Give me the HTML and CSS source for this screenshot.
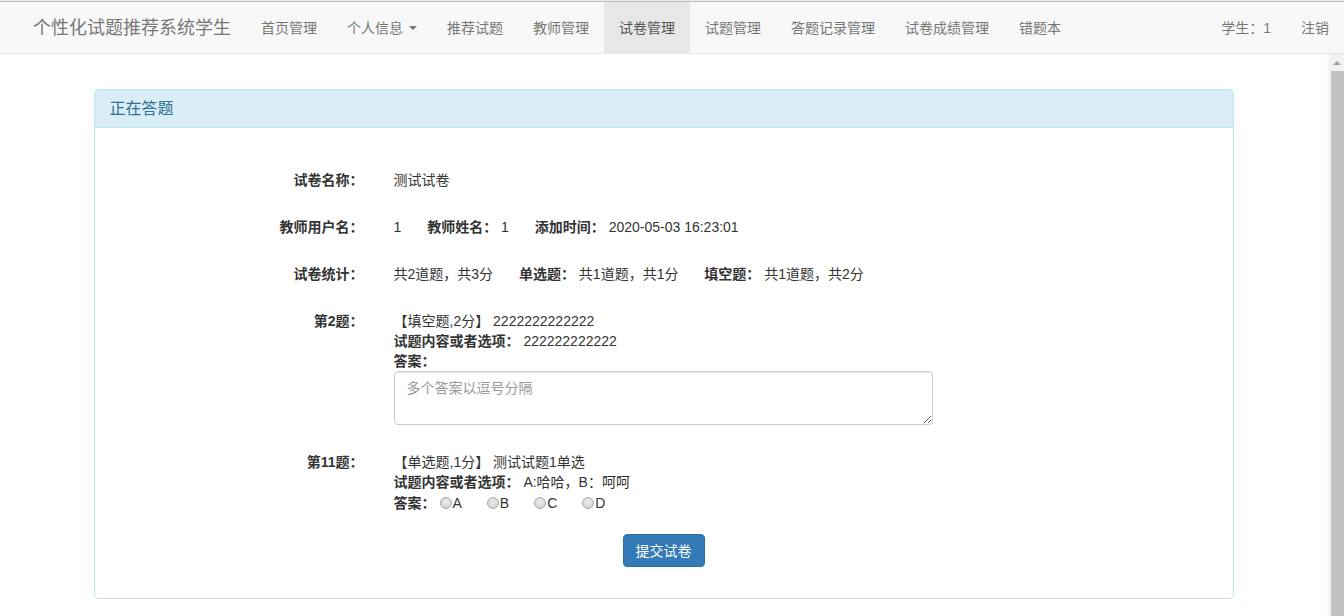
FILE: index.html
```html
<!DOCTYPE html>
<html lang="zh-CN">
<head>
<meta charset="utf-8">
<title>正在答题</title>
<link rel="stylesheet" href="styles.css">
</head>
<body>
<div class="topline"></div>
<nav class="navbar">
  <a class="brand" href="#">个性化试题推荐系统学生</a>
  <ul class="nav">
    <li><a href="#">首页管理</a></li>
    <li><a href="#">个人信息 <span class="caret"></span></a></li>
    <li><a href="#">推荐试题</a></li>
    <li><a href="#">教师管理</a></li>
    <li class="active"><a href="#">试卷管理</a></li>
    <li><a href="#">试题管理</a></li>
    <li><a href="#">答题记录管理</a></li>
    <li><a href="#">试卷成绩管理</a></li>
    <li><a href="#">错题本</a></li>
  </ul>
  <ul class="nav nav-right">
    <li><a href="#">学生：1</a></li>
    <li><a href="#">注销</a></li>
  </ul>
</nav>
<div class="viewport">
  <main class="page">
    <div class="container">
      <section class="panel">
        <div class="panel-heading">正在答题</div>
        <form class="panel-body">
          <div class="field">
            <div class="label">试卷名称：</div>
            <div class="value"><span class="paper">测试试卷</span></div>
          </div>
          <div class="field">
            <div class="label">教师用户名：</div>
            <div class="value">
              <span class="item">1</span>
              <span class="item"><b>教师姓名：</b> 1</span>
              <span class="item"><b>添加时间：</b> 2020-05-03 16:23:01</span>
            </div>
          </div>
          <div class="field">
            <div class="label">试卷统计：</div>
            <div class="value">
              <span class="item">共2道题，共3分</span>
              <span class="item"><b>单选题：</b> 共1道题，共1分</span>
              <span class="item"><b>填空题：</b> 共1道题，共2分</span>
            </div>
          </div>
          <div class="field">
            <div class="label">第2题：</div>
            <div class="value">
              <div class="line">【填空题,2分】 2222222222222</div>
              <div class="line"><b>试题内容或者选项：</b> 222222222222</div>
              <div class="line"><b>答案：</b></div>
              <textarea class="answer" placeholder="多个答案以逗号分隔"></textarea>
            </div>
          </div>
          <div class="field">
            <div class="label">第11题：</div>
            <div class="value">
              <div class="line">【单选题,1分】 <span class="paper">测试试题1单选</span></div>
              <div class="line"><b>试题内容或者选项：</b> A:哈哈，B：呵呵</div>
              <div class="line radios"><b>答案：</b><label class="opt"><input type="radio" name="q11">A</label><label class="opt"><input type="radio" name="q11">B</label><label class="opt"><input type="radio" name="q11">C</label><label class="opt"><input type="radio" name="q11">D</label></div>
            </div>
          </div>
          <div class="actions">
            <button type="button" class="btn">提交试卷</button>
          </div>
        </form>
      </section>
    </div>
  </main>
  <div class="scrollbar" aria-hidden="true">
    <span class="sb-arrow"></span>
    <span class="sb-thumb"></span>
  </div>
</div>
</body>
</html>
```
FILE: styles.css
```css
* { box-sizing: border-box; }
html, body { margin: 0; height: 100%; }
body {
  font-family: "Liberation Sans", "Noto Sans CJK SC", sans-serif;
  font-size: 14px;
  line-height: 20px;
  color: #333;
  background: #fff;
  display: flex;
  flex-direction: column;
  overflow: hidden;
}
a { text-decoration: none; }
b { font-weight: bold; }

.topline { height: 1px; background: #ececec; flex: none; }

.navbar {
  flex: none;
  height: 53px;
  display: flex;
  align-items: stretch;
  background: #f8f8f8;
  border-top: 1px solid #bdbdbd;
  border-bottom: 1px solid #e7e7e7;
  padding-left: 18px;
}
.brand {
  display: flex;
  align-items: center;
  padding: 0 15px;
  font-size: 18px;
  color: #777;
}
.nav {
  list-style: none;
  margin: 0;
  padding: 0;
  display: flex;
}
.nav li { display: flex; }
.nav a {
  display: flex;
  align-items: center;
  padding: 0 15px;
  color: #777;
  white-space: pre;
}
.nav .active a { background: #e7e7e7; color: #555; }
.nav-right { margin-left: auto; }
.caret {
  display: inline-block;
  width: 0;
  height: 0;
  margin-left: 2px;
  margin-top: 1px;
  border-top: 4px solid #777;
  border-left: 4px solid transparent;
  border-right: 4px solid transparent;
}

.viewport {
  flex: 1;
  min-height: 0;
  display: flex;
}
.page {
  flex: 1;
  overflow: hidden;
}
.scrollbar {
  flex: none;
  width: 17px;
  display: flex;
  flex-direction: column;
  background: #f1f1f1;
  border-left: 2px solid #fafafa;
}
.sb-arrow {
  flex: none;
  height: 17px;
  display: flex;
  justify-content: center;
  align-items: center;
}
.sb-arrow::before {
  content: "";
  width: 0;
  height: 0;
  border-bottom: 4px solid #a3a3a3;
  border-left: 4px solid transparent;
  border-right: 4px solid transparent;
}
.sb-thumb {
  flex: 1;
  margin-left: 2px;
  background: #c1c1c1;
}

.container {
  width: 1140px;
  margin: 0 auto;
  padding: 35px 0 20px;
}
.panel {
  border: 1px solid #bce8f1;
  border-radius: 4px;
  background: #fff;
}
.panel-heading {
  height: 38px;
  padding: 9px 15px 0;
  font-size: 16px;
  line-height: 20px;
  color: #31708f;
  background: #d9edf7;
  border-bottom: 1px solid #bce8f1;
  border-radius: 3px 3px 0 0;
}
.panel-body {
  display: flex;
  flex-direction: column;
  gap: 13px;
  padding: 35px 15px 31px;
  margin: 0;
}
.field {
  display: grid;
  grid-template-columns: 254px 1fr;
  column-gap: 30px;
  padding: 7px 0;
  align-items: start;
}
.label {
  text-align: right;
  font-weight: bold;
}
.item + .item { margin-left: 22px; }
.line { height: 20px; white-space: nowrap; }
.answer {
  display: block;
  width: 539px;
  height: 54px;
  margin-top: 0;
  padding: 6px 12px;
  border: 1px solid #ccc;
  border-radius: 4px;
  font: inherit;
  color: #555;
  resize: vertical;
  box-shadow: inset 0 1px 1px rgba(0,0,0,.075);
}
.answer::placeholder { color: #999; }
.radios { height: 22px; line-height: 22px; }
.opt { margin-right: 21px; }
.opt input {
  appearance: none;
  -webkit-appearance: none;
  width: 12px;
  height: 12px;
  margin: 0 1px 0 4px;
  border: 1px solid #a9a9a9;
  border-radius: 50%;
  background: radial-gradient(circle at 50% 40%, #ececec, #cdcdcd);
  vertical-align: -1px;
}
.actions {
  display: flex;
  justify-content: center;
  margin-top: 0;
}
.btn {
  height: 33px;
  padding: 0 12px;
  font: inherit;
  color: #fff;
  background: #337ab7;
  border: 1px solid #2e6da4;
  border-radius: 4px;
}
```
